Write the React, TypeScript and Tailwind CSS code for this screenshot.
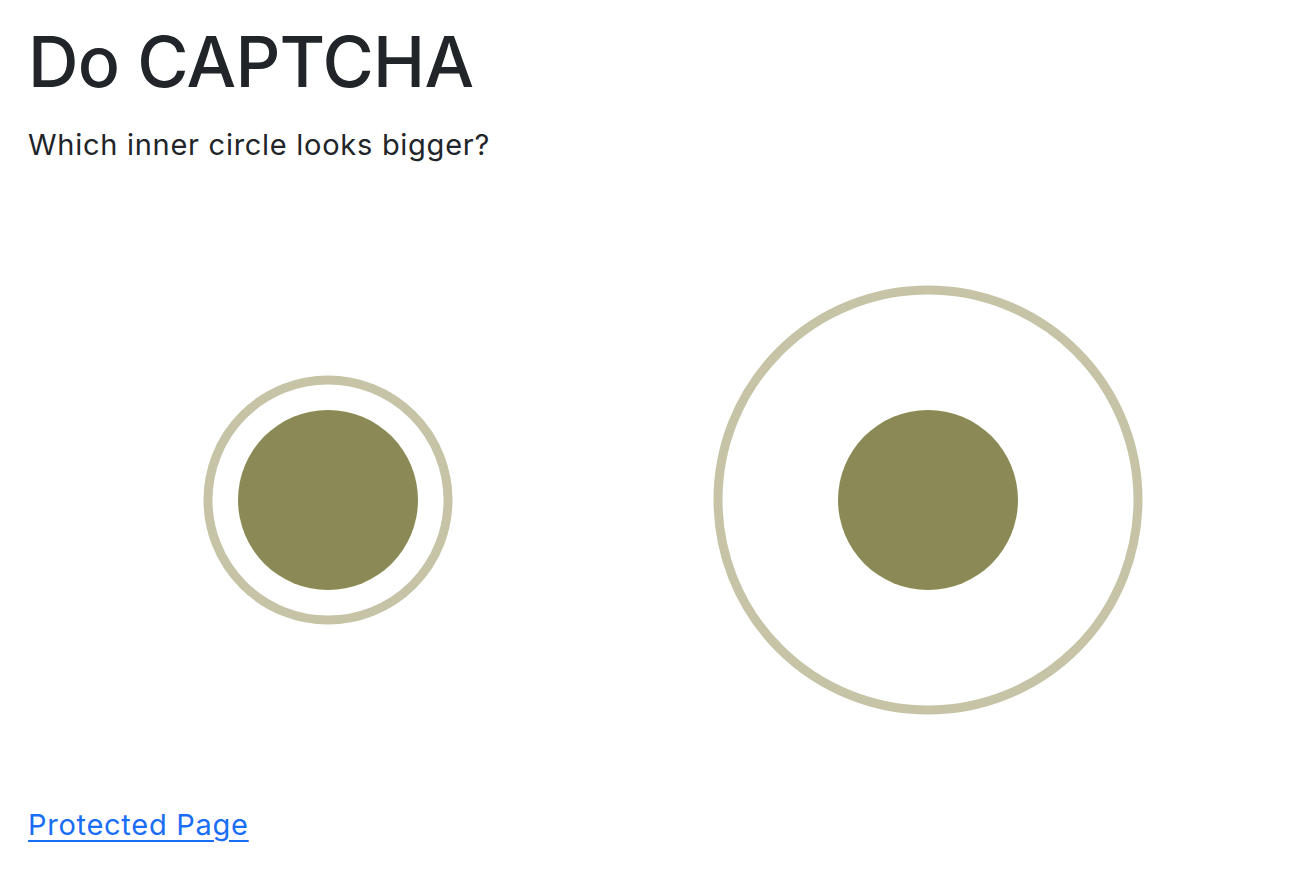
const ringColor = "#c6c3a7";
const fillColor = "#8b8a56";

function Illusion({ outer }: { outer: number }) {
  return (
    <svg width={600} height={600} viewBox="0 0 600 600" className="block shrink-0">
      <circle cx={300} cy={301} r={outer} fill="none" stroke={ringColor} strokeWidth={9} />
      <circle cx={300} cy={301} r={90} fill={fillColor} />
    </svg>
  );
}

export default function App() {
  return (
    <div
      className="min-h-screen bg-white px-[28px] pt-[20px] text-[#212529]"
      style={{ fontFamily: "Inter, 'Noto Sans', sans-serif" }}
    >
      <h1 className="m-0 text-[70px] font-medium leading-[1.2] tracking-[-0.01em]">Do CAPTCHA</h1>
      <p className="mt-[19px] text-[29px] leading-[1.5] tracking-[0.025em]">
        Which inner circle looks bigger?
      </p>
      <div className="mt-[32px] flex">
        <Illusion outer={120} />
        <Illusion outer={210} />
      </div>
      <p className="mt-[4px] text-[29px] leading-[1.5] tracking-[0.025em]">
        <a href="#" className="text-[#1a6ef5] underline underline-offset-[5px]">
          Protected Page
        </a>
      </p>
    </div>
  );
}
